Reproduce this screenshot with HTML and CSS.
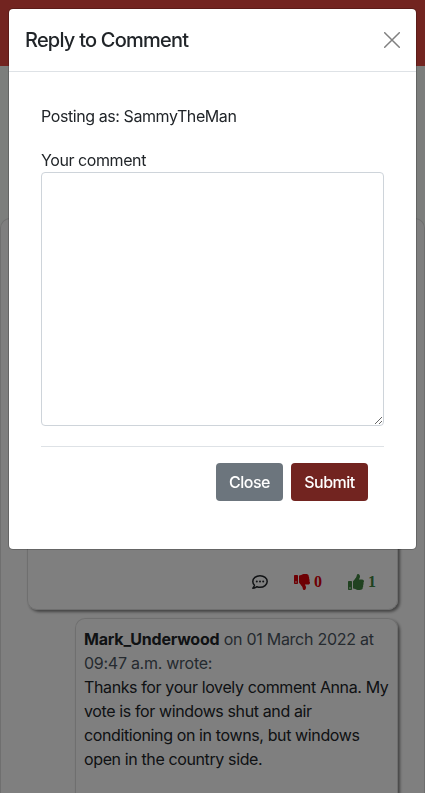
FILE: index.html
```html
<!DOCTYPE html>
<html lang="en">
<head>
<meta charset="utf-8">
<title>Reply to Comment</title>
<link rel="stylesheet" href="styles.css">
</head>
<body>
<header class="navbar"></header>
<main class="post">
  <article class="comment">
    <div class="actions">
      <svg class="icon chat" viewBox="0 0 16 16"><path d="M8 1.750c4 0 7.200 2.600 7.200 5.750S12 13.250 8 13.250c-1.100 0-2.100-.2-3-.550-1 .8-2.400 1.500-4.200 1.500.8-.8 1.500-1.900 1.700-3C1.400 10.200.8 8.900.8 7.500.8 4.350 4 1.750 8 1.750z" fill="none" stroke="currentColor" stroke-width="1.500" stroke-linejoin="round"/><circle cx="4.800" cy="7.500" r="1"/><circle cx="8" cy="7.500" r="1"/><circle cx="11.200" cy="7.500" r="1"/></svg>
      <span class="vote down"><svg class="icon" viewBox="0 0 512 512"><path d="M0 56v240c0 13.255 10.745 24 24 24h80c13.255 0 24-10.745 24-24V56c0-13.255-10.745-24-24-24H24C10.745 32 0 42.745 0 56zm40 200c0-13.255 10.745-24 24-24s24 10.745 24 24-10.745 24-24 24-24-10.745-24-24zm272 256c-20.183 0-29.485-39.293-33.931-57.795-5.206-21.666-10.589-44.070-25.393-58.902-32.469-32.524-49.503-73.967-89.117-113.111a11.980 11.980 0 0 1-3.558-8.521V59.901c0-6.541 5.243-11.878 11.783-11.998 15.831-.290 36.694-9.079 52.651-16.178C256.189 17.598 295.709.017 343.995 0h2.844c42.777 0 93.363.413 113.774 29.737 8.392 12.057 10.446 27.034 6.148 44.632 16.312 17.053 25.063 48.863 16.382 74.757 17.544 23.432 19.143 56.132 9.308 79.469l.110.110c11.893 11.949 19.523 31.259 19.439 49.197-.156 30.352-26.157 58.098-59.553 58.098H350.723C358.030 364.340 384 388.132 384 430.548 384 504 336 512 312 512z"/></svg>0</span>
      <span class="vote up"><svg class="icon" viewBox="0 0 512 512"><path d="M104 224H24c-13.255 0-24 10.745-24 24v240c0 13.255 10.745 24 24 24h80c13.255 0 24-10.745 24-24V248c0-13.255-10.745-24-24-24zM64 472c-13.255 0-24-10.745-24-24s10.745-24 24-24 24 10.745 24 24-10.745 24-24 24zM384 81.452c0 42.416-25.970 66.208-33.277 94.548h101.723c33.397 0 59.397 27.746 59.553 58.098.084 17.938-7.546 37.249-19.439 49.197l-.110.110c9.836 23.337 8.237 56.037-9.308 79.469 8.681 25.895-.069 57.704-16.382 74.757 4.298 17.598 2.244 32.575-6.148 44.632C440.202 511.587 389.616 512 346.839 512l-2.845-.001c-48.287-.017-87.806-17.598-119.560-31.725-15.957-7.099-36.821-15.887-52.651-16.178-6.540-.120-11.783-5.457-11.783-11.998v-213.770c0-3.200 1.282-6.271 3.558-8.521 39.614-39.144 56.648-80.587 89.117-113.111 14.804-14.832 20.188-37.236 25.393-58.902C282.515 39.293 291.817 0 312 0c24 0 72 8 72 81.452z"/></svg>1</span>
    </div>
  </article>
  <article class="comment reply">
    <div class="meta"><strong>Mark_Underwood</strong> on 01 March 2022 at<br>09:47 a.m. wrote:</div>
    <p class="text">Thanks for your lovely comment Anna. My<br>vote is for windows shut and air<br>conditioning on in towns, but windows<br>open in the country side.</p>
  </article>
</main>
<div class="backdrop"></div>
<section class="modal" role="dialog" aria-labelledby="title">
  <div class="modal-header">
    <h5 id="title">Reply to Comment</h5>
    <svg class="close" viewBox="0 0 16 16"><path d="M.7.7l14.600 14.600M15.300.7L.7 15.300" stroke="currentColor" stroke-width="1.500" stroke-linecap="round"/></svg>
  </div>
  <form class="modal-body">
    <p class="author">Posting as: SammyTheMan</p>
    <label for="comment">Your comment</label>
    <textarea id="comment"></textarea>
    <div class="modal-footer">
      <button type="button" class="btn">Close</button>
      <button type="button" class="btn primary">Submit</button>
    </div>
  </form>
</section>
</body>
</html>
```
FILE: styles.css
```css
* { box-sizing: border-box; }

html, body { height: 100%; }

body {
  display: flex;
  flex-direction: column;
  margin: 0;
  background: #f9fcf8;
  color: #212529;
  font: 16px/24px Inter, "Liberation Sans", sans-serif;
  letter-spacing: -0.42px;
}

.navbar {
  position: relative;
  z-index: 2;
  flex: none;
  height: 66px;
  background: #722420;
}

.post {
  flex: 1;
  min-height: 0;
  margin-top: 152px;
  padding: 0 26px;
  border: 1px solid #dfdfdf;
  border-bottom: 0;
  border-radius: 10px 10px 0 0;
  background: #fff;
}

.comment {
  display: flex;
  flex-direction: column;
  justify-content: flex-end;
  height: 391px;
  padding: 8px 21px 15px 8px;
  border: 1px solid #dfdfdf;
  border-radius: 10px;
  box-shadow: 2px 2px 3px #888;
}

.reply {
  justify-content: flex-start;
  height: 175px;
  margin: 8px 0 0 48px;
  padding: 8px;
  border-bottom: 0;
  border-radius: 10px 10px 0 0;
}

.meta { color: #4a5560; white-space: nowrap; letter-spacing: -0.27px; }
.meta strong { color: #212529; font-weight: 700; letter-spacing: -0.2px; }
.text { margin: 0; white-space: nowrap; letter-spacing: -0.38px; }

.actions {
  display: flex;
  justify-content: flex-end;
  align-items: center;
  gap: 26px;
}

.icon { width: 16px; height: 16px; fill: currentColor; }

.vote {
  display: flex;
  align-items: center;
  gap: 4px;
  font: bold 16px/24px "Liberation Serif", serif;
  letter-spacing: 0;
}

.vote .icon { margin-bottom: 1px; }

.down { color: #dc0008; }
.up { color: #408440; }

.backdrop {
  position: fixed;
  inset: 0;
  z-index: 1;
  background: rgba(0, 0, 0, 0.5);
}

.modal {
  position: absolute;
  top: 8px;
  left: 8px;
  z-index: 3;
  width: 409px;
  height: 542px;
  border: 1px solid rgba(0, 0, 0, 0.2);
  border-radius: 5px;
  background: #fff;
  background-clip: padding-box;
}

.modal-header {
  display: flex;
  align-items: center;
  justify-content: space-between;
  height: 63px;
  padding: 0 16px;
  border-bottom: 1px solid #dee2e6;
}

h5 {
  margin: 0;
  font-size: 20px;
  font-weight: 550;
  line-height: 30px;
  letter-spacing: -0.78px;
}

.close { width: 16px; height: 16px; color: #808080; }

.modal-body { padding: 32px; }

.author { margin: 0 0 20px; }

label { display: block; }

textarea {
  display: block;
  width: 100%;
  height: 254px;
  border: 1px solid #ced4da;
  border-radius: 4px;
  resize: both;
}

.modal-footer {
  display: flex;
  justify-content: flex-end;
  gap: 8px;
  margin-top: 20px;
  padding: 16px 16px 0;
  border-top: 1px solid #dee2e6;
}

.btn {
  width: 67px;
  height: 38px;
  padding: 0;
  border: 0;
  border-radius: 4px;
  background: #6c757d;
  color: #fff;
  font: 550 16px/24px Inter, sans-serif;
  letter-spacing: -0.5px;
}

.primary { width: 77px; background: #722420; }
```
